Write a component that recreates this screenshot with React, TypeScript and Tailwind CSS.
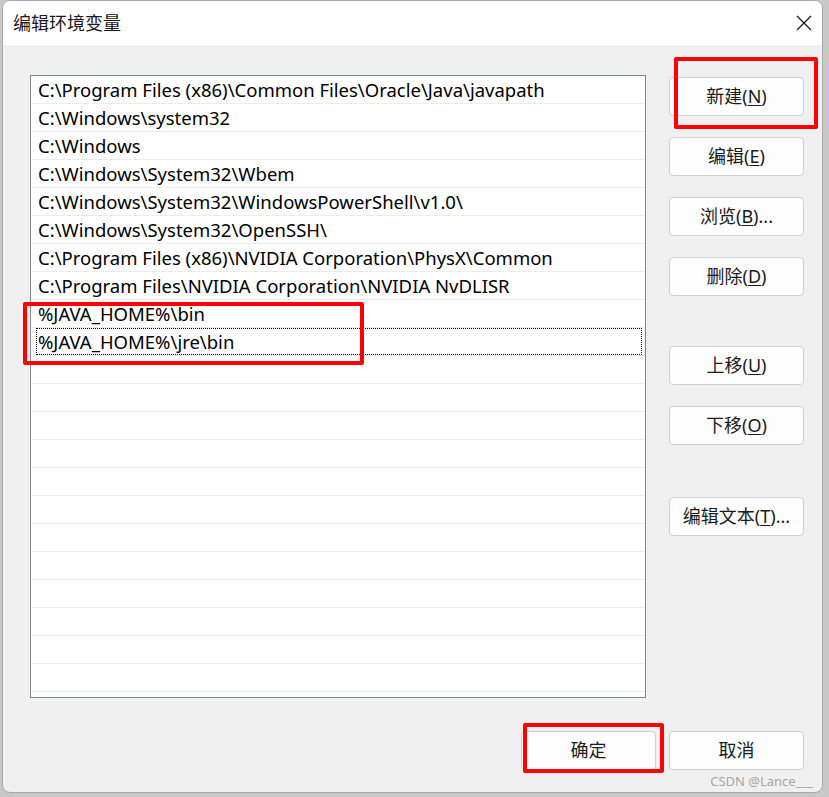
import React from 'react';

const paths = [
  'C:\\Program Files (x86)\\Common Files\\Oracle\\Java\\javapath',
  'C:\\Windows\\system32',
  'C:\\Windows',
  'C:\\Windows\\System32\\Wbem',
  'C:\\Windows\\System32\\WindowsPowerShell\\v1.0\\',
  'C:\\Windows\\System32\\OpenSSH\\',
  'C:\\Program Files (x86)\\NVIDIA Corporation\\PhysX\\Common',
  'C:\\Program Files\\NVIDIA Corporation\\NVIDIA NvDLISR',
  '%JAVA_HOME%\\bin',
  '%JAVA_HOME%\\jre\\bin',
];

const ROWS = 22;
const FONT = { fontFamily: '"Noto Sans", "Noto Sans CJK SC", sans-serif' };

function Btn({ label, k, tail = ')' }: { label: string; k?: string; tail?: string }) {
  return (
    <button className="w-[135px] h-[39px] rounded-[4px] border border-[#d0d0d0] bg-[#fdfdfd] text-[18px] text-[#1a1a1a] flex items-center justify-center">
      {label}
      {k && (
        <>
          (<span className="underline underline-offset-2">{k}</span>
          {tail}
        </>
      )}
    </button>
  );
}

export default function App() {
  return (
    <div className="w-[829px] h-[797px] bg-[#c8c8c8] pl-[2px] pr-[6px] pb-[4px] overflow-hidden" style={FONT}>
      <div className="w-[821px] h-[793px] rounded-[8px] border border-[#a8a8a8] bg-[#f0f0f0] flex flex-col overflow-hidden">
        <div className="h-[44px] bg-white flex items-center justify-between pl-[10px] pr-[10px]">
          <span className="text-[18px] text-[#1a1a1a]">编辑环境变量</span>
          <svg width="16" height="16" viewBox="0 0 16 16">
            <path d="M1 1 L15 15 M15 1 L1 15" stroke="#1a1a1a" strokeWidth="1.3" />
          </svg>
        </div>

        <div className="relative flex-1 flex flex-col pl-[27px] pt-[30px]">
          <div className="flex">
            <div className="w-[616px] h-[623px] bg-white border border-[#82878c] flex flex-col">
              {Array.from({ length: ROWS }).map((_, i) => (
                <div key={i} className="h-[28px] shrink-0 border-b border-[#ececec] pl-[5px] pr-[3px] flex items-center">
                  <div
                    className={`w-full h-full flex items-center pl-[1px] pt-[2px] text-[18.5px] leading-none text-black ${
                      i === 9 ? 'border border-dotted border-black' : 'border border-transparent'
                    }`}
                  >
                    {paths[i] ?? ''}
                  </div>
                </div>
              ))}
            </div>

            <div className="ml-[23px] flex flex-col pt-[2px]">
              <Btn label="新建" k="N" />
              <div className="h-[21px]" />
              <Btn label="编辑" k="E" />
              <div className="h-[21px]" />
              <Btn label="浏览" k="B" tail=")..." />
              <div className="h-[21px]" />
              <Btn label="删除" k="D" />
              <div className="h-[50px]" />
              <Btn label="上移" k="U" />
              <div className="h-[21px]" />
              <Btn label="下移" k="O" />
              <div className="h-[52px]" />
              <Btn label="编辑文本" k="T" tail=")..." />
            </div>
          </div>

          <div className="flex justify-end gap-[13px] pr-[18px] mt-[33px]">
            <Btn label="确定" />
            <Btn label="取消" />
          </div>

          <span className="absolute right-[9px] bottom-[4px] text-[13px] leading-none text-[#a6a6a6]">CSDN @Lance___</span>

          {/* red annotation boxes */}
          <div className="absolute left-[671px] top-[12px] w-[144px] h-[72px] border-[4px] border-[#ff0000] rounded-[2px]" />
          <div className="absolute left-[20px] top-[257px] w-[341px] h-[63px] border-[4px] border-[#ff0000] rounded-[2px]" />
          <div className="absolute left-[520px] top-[678px] w-[141px] h-[50px] border-[4px] border-[#ff0000] rounded-[2px]" />
        </div>
      </div>
    </div>
  );
}
